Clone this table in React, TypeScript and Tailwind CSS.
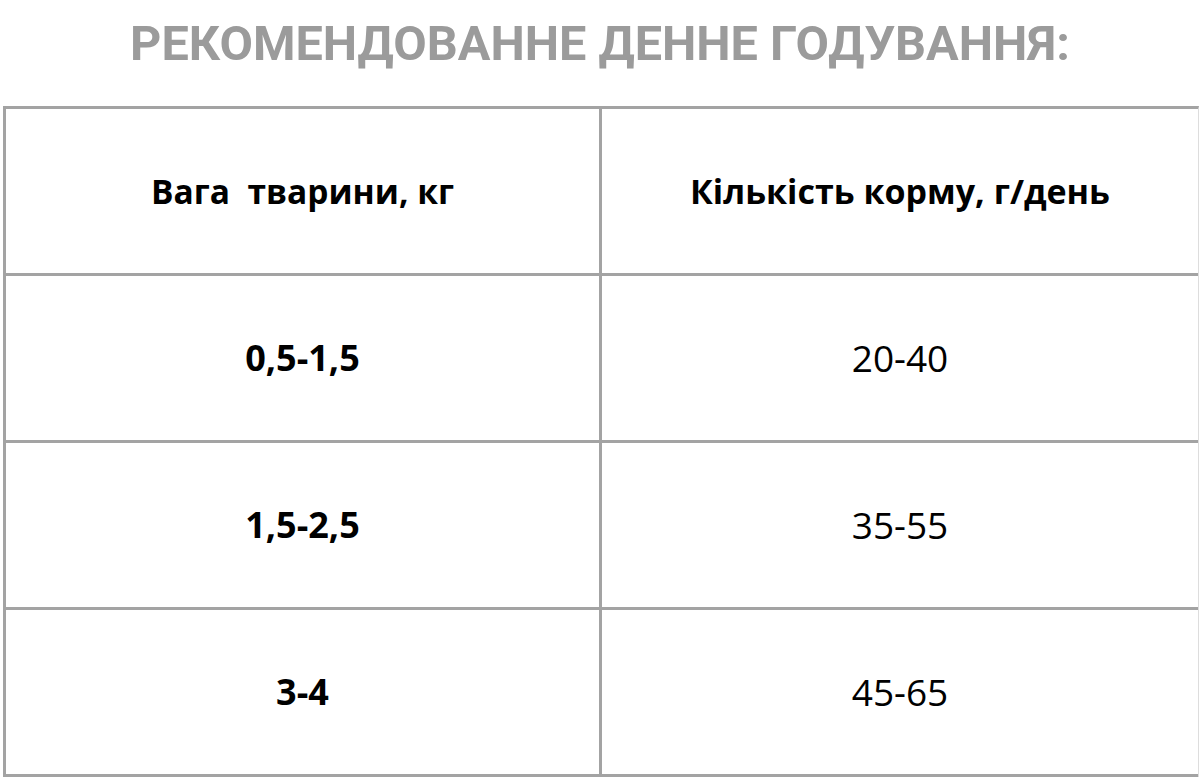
const rows = [
  { weight: '0,5-1,5', amount: '20-40' },
  { weight: '1,5-2,5', amount: '35-55' },
  { weight: '3-4', amount: '45-65' },
]

export default function App() {
  return (
    <div className="w-[1200px] h-[780px] bg-white overflow-hidden">
      {/* Title */}
      <h1 className="h-[106px] flex items-start justify-center pt-[14px] text-[48.6px] leading-[60px] font-bold text-[#9b9b9b] font-['Roboto',sans-serif]">
        РЕКОМЕНДОВАННЕ ДЕННЕ ГОДУВАННЯ:
      </h1>

      {/* Table */}
      <div className="ml-[3px] w-[1196px] border-l-[3px] border-t-[3px] border-r border-[#a3a3a3] border-r-[#dddddd] font-['Open_Sans',sans-serif] text-black">
        <div className="grid grid-cols-[596px_1fr] h-[167px] border-b-[3px] border-[#a3a3a3]">
          <div className="flex items-center justify-center border-r-[3px] border-[#a3a3a3] text-[33.5px] font-bold">
            Вага&nbsp;&nbsp;тварини, кг
          </div>
          <div className="flex items-center justify-center text-[34px] font-bold">
            Кількість корму, г/день
          </div>
        </div>
        {rows.map((r) => (
          <div key={r.weight} className="grid grid-cols-[596px_1fr] h-[167px] border-b-[3px] border-[#a3a3a3]">
            <div className="flex items-center justify-center border-r-[3px] border-[#a3a3a3] text-[36px] font-bold">
              {r.weight}
            </div>
            <div className="flex items-center justify-center text-[37px]">
              {r.amount}
            </div>
          </div>
        ))}
      </div>
    </div>
  )
}
